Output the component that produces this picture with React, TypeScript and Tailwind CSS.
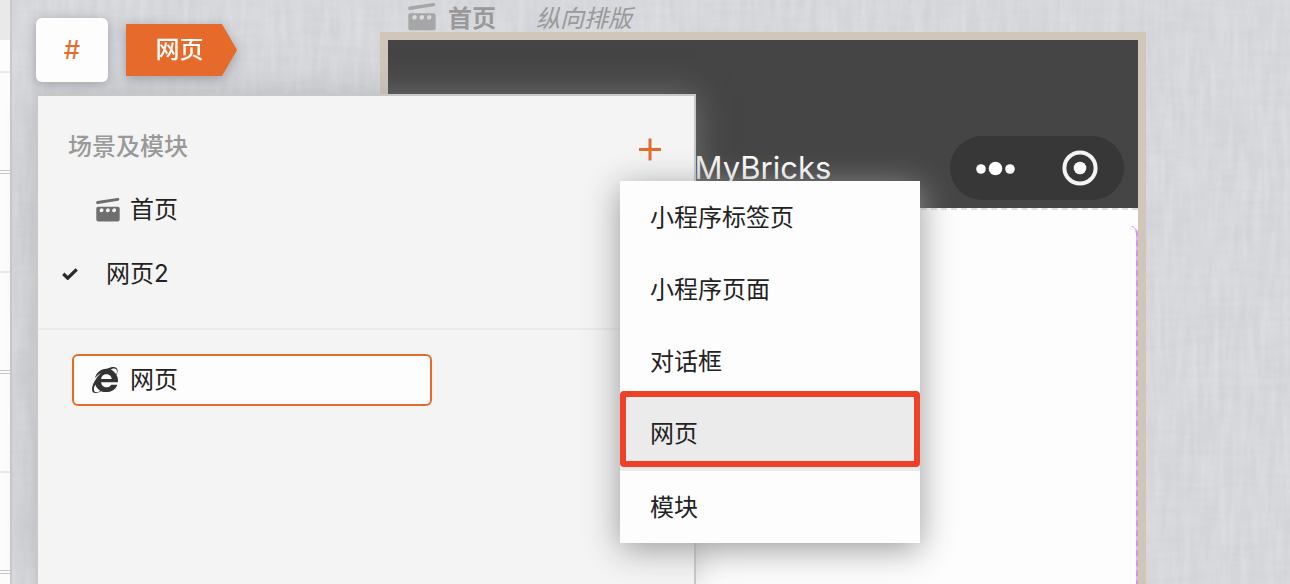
import React from "react";
import { FaInternetExplorer } from "react-icons/fa";

const menuItems = ["小程序标签页", "小程序页面", "对话框", "网页"];
const columns = [0, 1, 2, 3];
const rows = [0, 1, 2, 3, 4, 5, 6, 7, 8, 9];
const railCells = [0, 1, 2];

function Clapper({ className }: { className: string }) {
  return (
    <svg viewBox="0 0 24 24" className={className} fill="currentColor" aria-hidden="true">
      <path d="M1.4 3.100 21.500 0c.9-.1 1.700.3 1.800 1.100.1.8-.4 1.500-1.300 1.700L2 6.100c-.9.1-1.700-.3-1.800-1.200-.1-.9.3-1.600 1.200-1.800Z" />
      <path
        fillRule="evenodd"
        d="M2.200 8.700h19.600c1.100 0 1.900.8 1.900 1.800v11.100c0 1-.8 1.800-1.900 1.800H2.200c-1.100 0-1.900-.8-1.900-1.800V10.500c0-1 .8-1.800 1.900-1.800ZM5.800 10.200c-1.200 0-2.200 1-2.200 2.300 0 1.100.7 1.800 1.700 1.800 1.200 0 2.200-1 2.200-2.300 0-1.100-.7-1.800-1.700-1.800Zm6.300 0c-1.200 0-2.200 1-2.200 2.300 0 1.100.7 1.800 1.700 1.800 1.200 0 2.200-1 2.200-2.300 0-1.100-.7-1.800-1.700-1.800Zm6.300 0c-1.200 0-2.200 1-2.200 2.300 0 1.100.7 1.800 1.700 1.800 1.200 0 2.200-1 2.200-2.300 0-1.100-.7-1.800-1.700-1.800Z"
      />
    </svg>
  );
}

function Linen() {
  return (
    <svg className="absolute inset-0 h-full w-full" aria-hidden="true">
      <filter id="weft" x="0" y="0" width="100%" height="100%">
        <feTurbulence type="fractalNoise" baseFrequency="0.02 0.14" numOctaves="2" seed="4" />
        <feColorMatrix values="0 0 0 0 0.5  0 0 0 0 0.51  0 0 0 0 0.55  0.3 0 0 0 -0.11" />
      </filter>
      <filter id="warp" x="0" y="0" width="100%" height="100%">
        <feTurbulence type="fractalNoise" baseFrequency="0.14 0.02" numOctaves="2" seed="9" />
        <feColorMatrix values="0 0 0 0 1  0 0 0 0 1  0 0 0 0 1  0.35 0 0 0 -0.11" />
      </filter>
      <rect width="100%" height="100%" filter="url(#weft)" />
      <rect width="100%" height="100%" filter="url(#warp)" />
    </svg>
  );
}

function Watermark() {
  return (
    <div
      aria-hidden="true"
      className="pointer-events-none absolute -top-45 -left-5 z-50 flex text-2xl leading-8 font-light text-black/[0.022] select-none"
    >
      {columns.map((c) => (
        <div key={c} className="w-[338px] shrink-0">
          {rows.map((r) => (
            <div key={r} className="h-20">
              <p className="w-max origin-top-left rotate-45">
                moyukai05 - 2024/05/14
                <br />
                16:10:29
              </p>
            </div>
          ))}
        </div>
      ))}
    </div>
  );
}

function AddMenu() {
  return (
    <div
      role="menu"
      className="absolute top-[67px] -right-[226px] z-20 w-[300px] bg-[#fdfdfd] shadow-[0_6px_32px_#999999]"
    >
      {menuItems.map((label) => (
        <button
          key={label}
          role="menuitem"
          className={
            label === "网页"
              ? "relative block h-[72px] w-full bg-[#ebebeb] px-[30px] pt-0.5 text-left"
              : "block h-[72px] w-full px-[30px] pt-0.5 text-left"
          }
        >
          {label}
          {label === "网页" && (
            <span className="absolute inset-x-0 -top-1.5 bottom-0.5 rounded-[4px] border-6 border-[#ee4128]" />
          )}
        </button>
      ))}
      <button role="menuitem" className="block h-[74px] w-full border-t-2 border-[#ebebeb] px-[30px] pt-0.5 text-left">
        模块
      </button>
    </div>
  );
}

function ScenePanel() {
  return (
    <section className="absolute top-[94px] bottom-0 left-6 z-10 w-[660px] border-2 border-b-0 border-[#c8c8c8] bg-[#f4f4f4] pt-[18px] shadow-[0_0_32px_#99999980]">
      <div className="relative flex h-16 items-center justify-between pr-8 pl-[30px]">
        <h2 className="pt-0.5 font-medium text-[#999999]">场景及模块</h2>
        <button aria-label="新建" aria-haspopup="menu" aria-expanded="true" className="pt-2 text-[#e66b2a]">
          <svg viewBox="0 0 24 24" className="size-6" stroke="currentColor" strokeWidth="3" aria-hidden="true">
            <path d="M1 11.500h22M12 .5v22" />
          </svg>
        </button>
        <AddMenu />
      </div>
      <ul className="border-b-2 border-[#eaeaea] pb-[22px]">
        <li>
          <button className="flex h-16 w-full items-center gap-2.5 pl-[58px]">
            <Clapper className="size-6 text-[#6e6e6e]" />
            首页
          </button>
        </li>
        <li>
          <button className="flex h-16 w-full items-center gap-7 pl-6">
            <svg viewBox="0 0 16 12" className="h-3 w-4" fill="none" stroke="#2b2b2b" strokeWidth="3.4" aria-hidden="true">
              <path d="m1.300 5.800 4.400 4.300L14.700 1.400" />
            </svg>
            网页2
          </button>
        </li>
      </ul>
      <div className="px-[34px] pt-6">
        <button className="flex h-[52px] w-[360px] items-center gap-3 rounded-md border-2 border-[#e66b2a] bg-[#fdfdfd] pl-[18px]">
          <FaInternetExplorer className="size-[26px] text-[#333333]" aria-hidden="true" />
          网页
        </button>
      </div>
    </section>
  );
}

function Phone() {
  return (
    <div className="flex grow flex-col border-8 border-b-0 border-[#d0c7ba] bg-[#fdfdfd]">
      <div className="relative flex h-[168px] items-end justify-center bg-[#454545] pb-2">
        <div className="flex h-16 items-center text-[31px] text-white">MyBricks</div>
        <svg viewBox="0 0 174 64" className="absolute right-3.5 bottom-2 h-16 w-[174px]" aria-hidden="true">
          <rect width="174" height="64" rx="32" fill="#373737" />
          <g fill="#fff">
            <circle cx="31" cy="33" r="4.800" />
            <circle cx="45.500" cy="32.500" r="6.800" />
            <circle cx="60" cy="33" r="4.800" />
            <circle cx="130" cy="32" r="6.300" />
          </g>
          <circle cx="130" cy="32" r="15.600" fill="none" stroke="#f4f4f4" strokeWidth="4" />
        </svg>
      </div>
      <div className="flex grow flex-col border-t-2 border-dashed border-[#dddddd] pt-4">
        <div className="flex grow rounded-tr-lg bg-[#e2b4f8]">
          <div className="grow rounded-tr-lg border-r-2 border-dashed border-[#cf98e6] bg-[#fdfdfd] bg-clip-padding" />
        </div>
      </div>
    </div>
  );
}

export default function App() {
  return (
    <div className="relative flex h-screen overflow-hidden bg-[#d4d6da] font-['Inter','Noto_Sans_CJK_SC',sans-serif] text-2xl text-[#222222]">
      <aside className="z-10 w-3 shrink-0 border-r-2 border-[#c8c9c9] bg-[#fdfdfd]">
        <div className="h-10 bg-[#e9e9e9]" />
        <div className="h-[33px] border-b-2 border-[#e9e9e9]" />
        <div className="h-[101px] border-b-4 border-double border-[#c8c8c8]" />
        {railCells.map((n) => (
          <div key={n}>
            <div className="h-[99px] border-b-2 border-[#e9e9e9]" />
            <div className="h-[101px] border-b-4 border-double border-[#c8c8c8]" />
          </div>
        ))}
      </aside>
      <main className="relative flex grow flex-col">
        <Linen />
        <div className="relative mr-36 ml-[368px] flex grow flex-col">
          <div className="flex h-8 items-center pt-1.5 pl-7 text-[#999999]">
            <Clapper className="mr-3 mb-1 size-7 text-[#a6a6a6]" />
            <span className="font-bold">首页</span>
            <span className="ml-10 italic">纵向排版</span>
          </div>
          <Phone />
        </div>
        <nav className="absolute top-[18px] left-6 z-20 flex items-center gap-[18px]">
          <button className="h-16 w-[72px] rounded-md bg-[#fdfdfd] text-[26px] text-[#e66b2a] shadow-[0_2px_12px_#a0a2aa]">
            #
          </button>
          <div className="drop-shadow-[0_3px_6px_#9c9ea6]">
            <button className="h-[52px] w-[111px] bg-[#e66b2a] pr-1 font-medium text-white [clip-path:polygon(0_0,96px_0,100%_50%,96px_100%,0_100%)]">
              网页
            </button>
          </div>
        </nav>
        <ScenePanel />
      </main>
      <Watermark />
    </div>
  );
}
